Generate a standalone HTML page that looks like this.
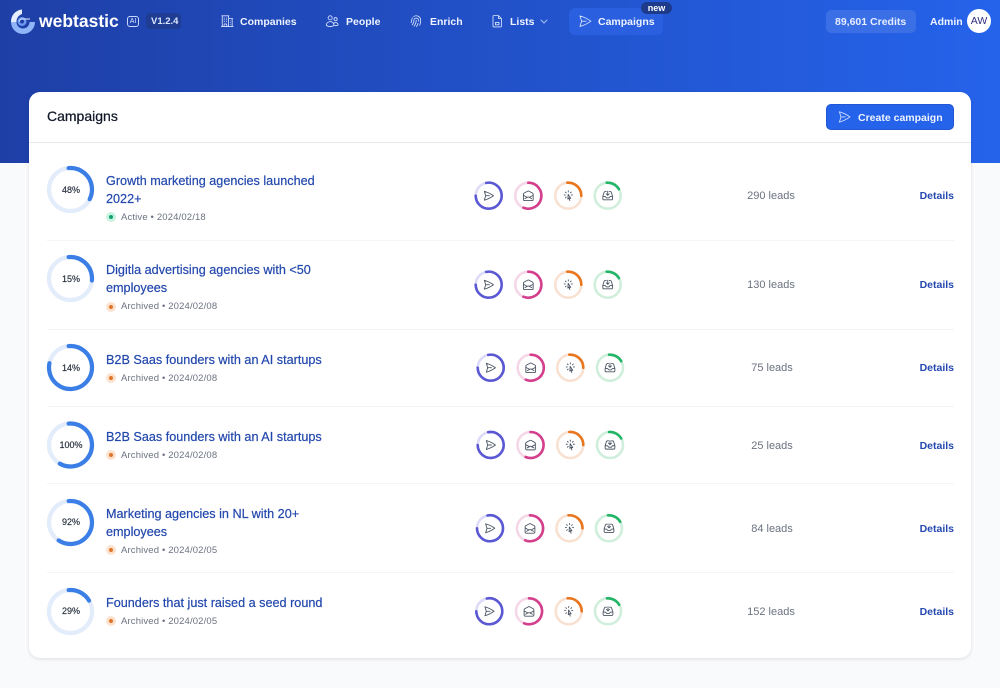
<!DOCTYPE html>
<html lang="en"><head><meta charset="utf-8"><title>Campaigns</title>
<style>
*{box-sizing:border-box}
html,body{margin:0;padding:0}
body{width:1000px;height:688px;overflow:hidden;position:relative;background:#f9fafb;font-family:"Liberation Sans",sans-serif}
.hero{position:absolute;left:0;top:0;width:1000px;height:163px;background:linear-gradient(90deg,#1e3fa6 0%,#2563eb 100%)}
.card{position:absolute;left:29px;top:92px;width:942px;height:566px;background:#fff;border-radius:11px;box-shadow:0 1px 3px rgba(0,0,0,.12)}
.t{position:absolute;white-space:nowrap;line-height:14px;height:14px}
.nav{font-size:10.5px;font-weight:bold;color:#eef3ff;top:15px}
.title{font-size:12.65px;color:#2348ad;-webkit-text-stroke:.2px #2348ad;line-height:18px;height:18px}
.meta{font-size:9.5px;color:#6b7280;letter-spacing:.15px}
.pct{font-size:9px;color:#1f2937;width:48px;text-align:center;left:47px;-webkit-text-stroke:.15px #1f2937}
.leads{font-size:11px;color:#6b7280;width:80px;text-align:center}
.det{font-size:10.5px;font-weight:bold;color:#2549b0;right:46px}
.sep{position:absolute;left:47px;width:907px;height:1px;background:#f3f4f6}
.box{position:absolute}
svg{position:absolute;left:0;top:0}
</style></head>
<body>
<div class="hero"></div>
<div class="box" style="left:146px;top:13px;width:35px;height:16px;background:#1f3d92;border-radius:4px"></div>
<div class="box" style="left:569px;top:8px;width:94px;height:27px;background:#2a5fdf;border-radius:6px"></div>
<div class="box" style="left:641px;top:2px;width:31px;height:12px;background:#1e3a8a;border-radius:6px"></div>
<div class="box" style="left:826px;top:10px;width:90px;height:23px;background:#3b6fe6;border-radius:5px"></div>
<div class="box" style="left:967px;top:9px;width:24px;height:24px;background:#fff;border-radius:50%"></div>

<div class="t" style="left:39px;top:10px;font-size:17.5px;line-height:22px;height:22px;font-weight:bold;color:#fff">webtastic</div>
<div class="box" style="left:127px;top:16px;width:12px;height:11px;border:1px solid #c9d8fb;border-radius:3px"></div>
<div class="t" style="left:127px;top:14.500px;width:12px;text-align:center;font-size:7px;color:#dbe6ff">AI</div>
<div class="t" style="left:151px;top:14.500px;font-size:9.5px;font-weight:bold;color:#dbe6ff">V1.2.4</div>
<div class="t nav" style="left:240px">Companies</div>
<div class="t nav" style="left:346px">People</div>
<div class="t nav" style="left:430px">Enrich</div>
<div class="t nav" style="left:510px">Lists</div>
<div class="t nav" style="left:598px">Campaigns</div>
<div class="t" style="left:641px;top:1px;width:31px;text-align:center;font-size:9px;font-weight:bold;color:#fff">new</div>
<div class="t nav" style="left:835px;color:#e6edff">89,601 Credits</div>
<div class="t nav" style="left:930px">Admin</div>
<div class="t" style="left:967px;top:14px;width:24px;text-align:center;font-size:10.5px;color:#312e81">AW</div>

<div class="card"></div>
<div class="box" style="left:29px;top:142px;width:942px;height:1px;background:#e5e7eb"></div>
<div class="t" style="left:47px;top:107px;height:18px;line-height:18px;font-size:14px;color:#111827;-webkit-text-stroke:.25px #111827">Campaigns</div>
<div class="box" style="left:826px;top:104px;width:128px;height:26px;background:#2563eb;border:1px solid #2156d4;border-radius:5px"></div>
<div class="t" style="left:858px;top:110.500px;font-size:10.500px;font-weight:bold;color:#eef3ff">Create campaign</div>

<div class="sep" style="top:240px"></div>
<div class="sep" style="top:329px"></div>
<div class="sep" style="top:406px"></div>
<div class="sep" style="top:483px"></div>
<div class="sep" style="top:572px"></div>

<div class="t pct" style="top:183px">48%</div>
<div class="t title" style="left:106px;top:172px">Growth marketing agencies launched</div>
<div class="t title" style="left:106px;top:190px">2022+</div>
<div class="box" style="left:106px;top:212px;width:10px;height:10px;border-radius:50%;background:#c9f2e0"></div>
<div class="box" style="left:109px;top:215px;width:4px;height:4px;border-radius:50%;background:#10a36f"></div>
<div class="t meta" style="left:121px;top:211px">Active • 2024/02/18</div>
<div class="t leads" style="left:731px;top:189px">290 leads</div>
<div class="t det" style="top:189px">Details</div>

<div class="t pct" style="top:272px">15%</div>
<div class="t title" style="left:106px;top:261px">Digitla advertising agencies with &lt;50</div>
<div class="t title" style="left:106px;top:279px">employees</div>
<div class="box" style="left:106px;top:302px;width:10px;height:10px;border-radius:50%;background:#fde3cf"></div>
<div class="box" style="left:109px;top:305px;width:4px;height:4px;border-radius:50%;background:#e0752a"></div>
<div class="t meta" style="left:121px;top:300px">Archived • 2024/02/08</div>
<div class="t leads" style="left:731px;top:278px">130 leads</div>
<div class="t det" style="top:278px">Details</div>

<div class="t pct" style="top:361px">14%</div>
<div class="t title" style="left:106px;top:351px">B2B Saas founders with an AI startups</div>
<div class="box" style="left:106px;top:373px;width:10px;height:10px;border-radius:50%;background:#fde3cf"></div>
<div class="box" style="left:109px;top:376px;width:4px;height:4px;border-radius:50%;background:#e0752a"></div>
<div class="t meta" style="left:121px;top:372px">Archived • 2024/02/08</div>
<div class="t leads" style="left:732px;top:361px">75 leads</div>
<div class="t det" style="top:361px">Details</div>

<div class="t pct" style="top:438px">100%</div>
<div class="t title" style="left:106px;top:428px">B2B Saas founders with an AI startups</div>
<div class="box" style="left:106px;top:450px;width:10px;height:10px;border-radius:50%;background:#fde3cf"></div>
<div class="box" style="left:109px;top:453px;width:4px;height:4px;border-radius:50%;background:#e0752a"></div>
<div class="t meta" style="left:121px;top:449px">Archived • 2024/02/08</div>
<div class="t leads" style="left:732px;top:439px">25 leads</div>
<div class="t det" style="top:439px">Details</div>

<div class="t pct" style="top:515px">92%</div>
<div class="t title" style="left:106px;top:505px">Marketing agencies in NL with 20+</div>
<div class="t title" style="left:106px;top:523px">employees</div>
<div class="box" style="left:106px;top:545px;width:10px;height:10px;border-radius:50%;background:#fde3cf"></div>
<div class="box" style="left:109px;top:548px;width:4px;height:4px;border-radius:50%;background:#e0752a"></div>
<div class="t meta" style="left:121px;top:544px">Archived • 2024/02/05</div>
<div class="t leads" style="left:732px;top:522px">84 leads</div>
<div class="t det" style="top:522px">Details</div>

<div class="t pct" style="top:604px">29%</div>
<div class="t title" style="left:106px;top:594px">Founders that just raised a seed round</div>
<div class="box" style="left:106px;top:616px;width:10px;height:10px;border-radius:50%;background:#fde3cf"></div>
<div class="box" style="left:109px;top:619px;width:4px;height:4px;border-radius:50%;background:#e0752a"></div>
<div class="t meta" style="left:121px;top:615px">Archived • 2024/02/05</div>
<div class="t leads" style="left:731px;top:605px">152 leads</div>
<div class="t det" style="top:605px">Details</div>

<svg width="1000" height="688" viewBox="0 0 1000 688" fill="none">
<defs>
<g id="plane"><path d="M6 12 3.269 3.125A59.769 59.769 0 0 1 21.485 12 59.768 59.768 0 0 1 3.27 20.875L5.999 12Zm0 0h7.5"/></g>
<g id="mail"><path d="M21.75 9v.906a2.25 2.25 0 0 1-1.183 1.981l-6.478 3.488M2.25 9v.906a2.25 2.25 0 0 0 1.183 1.981l6.478 3.488m8.839 2.51-4.66-2.51m0 0-1.023-.55a2.25 2.25 0 0 0-2.134 0l-1.022.55m0 0-4.661 2.51m16.5 1.615a2.25 2.25 0 0 1-2.25 2.25h-15a2.25 2.25 0 0 1-2.25-2.25V8.844a2.25 2.25 0 0 1 1.183-1.981l7.5-4.039a2.25 2.25 0 0 1 2.134 0l7.5 4.039a2.25 2.25 0 0 1 1.183 1.98V19.5Z"/></g>
<g id="cursor"><path d="M15.042 21.672 13.684 16.6m0 0-2.51 2.225.569-9.47 5.227 7.917-3.286-.672ZM12 2.25V4.5m5.834.166-1.591 1.591M20.25 10.5H18M7.757 14.743l-1.59 1.59M6 10.5H3.75m4.007-4.243-1.59-1.59"/></g>
<g id="inbox"><path d="M9 3.75H6.912a2.25 2.25 0 0 0-2.15 1.588L2.35 13.177a2.25 2.25 0 0 0-.1.661V18a2.25 2.25 0 0 0 2.25 2.25h15A2.25 2.25 0 0 0 21.75 18v-4.162c0-.224-.034-.447-.1-.661L19.24 5.338a2.25 2.25 0 0 0-2.15-1.588H15M2.25 13.5h3.86a2.25 2.25 0 0 1 2.012 1.244l.256.512a2.25 2.25 0 0 0 2.013 1.244h3.218a2.25 2.25 0 0 0 2.013-1.244l.256-.512a2.25 2.25 0 0 1 2.013-1.244h3.859M12 3v8.25m0 0-3-3m3 3 3-3"/></g>
<g id="p"><circle r="13" stroke="#dedbf8" stroke-width="2.6"/><path d="M-2.500-12.800A13 13 0 1 1-13 0" stroke="#5a58d2" stroke-width="2.6" stroke-linecap="round"/><use href="#plane" transform="translate(-6,-6) scale(.5)" stroke="#4b5563" stroke-width="1.8" stroke-linecap="round" stroke-linejoin="round"/></g>
<g id="m"><circle r="13" stroke="#f6d7e7" stroke-width="2.6"/><path d="M0-13A13 13 0 1 1-4.900 12" stroke="#d43f8d" stroke-width="2.6" stroke-linecap="round"/><use href="#mail" transform="translate(-6,-6) scale(.5)" stroke="#4b5563" stroke-width="1.8" stroke-linecap="round" stroke-linejoin="round"/></g>
<g id="c"><circle r="13" stroke="#f9e1d2" stroke-width="2.6"/><path d="M-1-13A13 13 0 0 1 13 0" stroke="#e8761e" stroke-width="2.6" stroke-linecap="round"/><use href="#cursor" transform="translate(-6,-6) scale(.5)" stroke="#4b5563" stroke-width="1.8" stroke-linecap="round" stroke-linejoin="round"/></g>
<g id="i"><circle r="13" stroke="#cfeedb" stroke-width="2.6"/><path d="M-1-13A13 13 0 0 1 11.200-6.500" stroke="#22b566" stroke-width="2.6" stroke-linecap="round"/><use href="#inbox" transform="translate(-6,-6) scale(.5)" stroke="#4b5563" stroke-width="1.8" stroke-linecap="round" stroke-linejoin="round"/></g>
</defs>

<!-- logo -->
<path d="M35 22A12 12 0 0 1 11 22H16.500A6.500 6.500 0 0 0 29.500 22Z" fill="#8fb4f8"/>
<path d="M11 22A12 12 0 0 1 22 9.500V14A8 8 0 0 0 16.500 22Z" fill="#e5edff"/>
<circle cx="22" cy="21.500" r="4.500" fill="#6d9af0"/>
<circle cx="22" cy="21.500" r="2" fill="#1e3fa6"/>
<path d="M22 19h8M22 19A2.500 2.500 0 0 0 19.500 21.500" stroke="#e5edff" stroke-width="1"/>

<!-- nav icons -->
<g stroke="#dbe6ff" stroke-width="1.4" stroke-linecap="round" stroke-linejoin="round">
<path transform="translate(220,14) scale(.6)" d="M2.25 21h19.5m-18-18v18m10.5-18v18m6-13.5V21M6.75 6.75h.75m-.75 3h.75m-.75 3h.75m3-6h.75m-.75 3h.75m-.75 3h.75M6.75 21v-3.375c0-.621.504-1.125 1.125-1.125h2.25c.621 0 1.125.504 1.125 1.125V21M3 3h12m-.75 4.5H21m-3.75 3.75h.008v.008h-.008v-.008Zm0 3h.008v.008h-.008v-.008Zm0 3h.008v.008h-.008v-.008Z"/>
<path transform="translate(325,14) scale(.6)" d="M15 19.128a9.38 9.38 0 0 0 2.625.372 9.337 9.337 0 0 0 4.121-.952 4.125 4.125 0 0 0-7.533-2.493M15 19.128v-.003c0-1.113-.285-2.16-.786-3.07M15 19.128v.106A12.318 12.318 0 0 1 8.624 21c-2.331 0-4.512-.645-6.374-1.766l-.001-.109a6.375 6.375 0 0 1 11.964-3.07M12 6.375a3.375 3.375 0 1 1-6.75 0 3.375 3.375 0 0 1 6.75 0Zm8.25 2.25a2.625 2.625 0 1 1-5.25 0 2.625 2.625 0 0 1 5.25 0Z"/>
<path transform="translate(409,14) scale(.6)" d="M7.864 4.243A7.5 7.5 0 0 1 19.5 10.5c0 2.92-.556 5.709-1.568 8.268M5.742 6.364A7.465 7.465 0 0 0 4.5 10.5a7.464 7.464 0 0 1-1.15 3.993m1.989 3.559A11.209 11.209 0 0 0 8.25 10.5a3.75 3.75 0 1 1 7.5 0c0 .527-.021 1.049-.064 1.565M12 10.5a14.94 14.94 0 0 1-3.6 9.75m6.633-4.596a18.666 18.666 0 0 1-2.485 5.33"/>
<path transform="translate(490,14) scale(.6)" d="M14 2.500H6.500A1.500 1.500 0 0 0 5 4v16a1.500 1.500 0 0 0 1.500 1.500h11A1.500 1.500 0 0 0 19 20V7.500L14 2.500ZM14 2.500V7.500H19M9 14h6v4H9Z"/>
<path d="M541 20l3 3 3-3" stroke="#a9c0f6" stroke-width="1"/>
<use href="#plane" transform="translate(578,14) scale(.6)"/>
<use href="#plane" transform="translate(837.500,110) scale(.58)"/>
</g>

<!-- big rings -->
<g stroke-width="4.200">
<circle cx="70.500" cy="189.500" r="21.500" stroke="#e3ecfa"/><circle cx="70.500" cy="278.500" r="21.500" stroke="#e3ecfa"/><circle cx="70.500" cy="367.500" r="21.500" stroke="#e3ecfa"/><circle cx="70.500" cy="445" r="21.500" stroke="#e3ecfa"/><circle cx="70.500" cy="522.500" r="21.500" stroke="#e3ecfa"/><circle cx="70.500" cy="611.500" r="21.500" stroke="#e3ecfa"/>
<g stroke="#3b7fe6" stroke-linecap="round">
<circle pathLength="100" stroke-dasharray="34 100" r="21.500" transform="translate(70.500,189.500) rotate(-95)"/>
<circle pathLength="100" stroke-dasharray="28 100" r="21.500" transform="translate(70.500,278.500) rotate(-95)"/>
<circle pathLength="100" stroke-dasharray="80 100" r="21.500" transform="translate(70.500,367.500) rotate(-95)"/>
<circle pathLength="100" stroke-dasharray="60 100" r="21.500" transform="translate(70.500,445) rotate(-95)"/>
<circle pathLength="100" stroke-dasharray="61 100" r="21.500" transform="translate(70.500,522.500) rotate(-95)"/>
<circle pathLength="100" stroke-dasharray="18 100" r="21.500" transform="translate(70.500,611.500) rotate(-95)"/>
</g></g>

<!-- small rings -->
<use href="#p" x="488.700" y="195.700"/><use href="#m" x="528.300" y="195.700"/><use href="#c" x="568.300" y="195.700"/><use href="#i" x="607.700" y="195.700"/>
<use href="#p" x="488.700" y="284.700"/><use href="#m" x="528.300" y="284.700"/><use href="#c" x="568.300" y="284.700"/><use href="#i" x="607.700" y="284.700"/>
<use href="#p" x="490.700" y="367.700"/><use href="#m" x="530.700" y="367.700"/><use href="#c" x="570.300" y="367.700"/><use href="#i" x="610" y="367.700"/>
<use href="#p" x="490.700" y="445"/><use href="#m" x="530.500" y="445"/><use href="#c" x="570.300" y="445"/><use href="#i" x="610" y="445"/>
<use href="#p" x="490" y="528.300"/><use href="#m" x="530" y="528.300"/><use href="#c" x="569.500" y="528.300"/><use href="#i" x="609" y="528.300"/>
<use href="#p" x="489.300" y="611.300"/><use href="#m" x="529" y="611.300"/><use href="#c" x="568.700" y="611.300"/><use href="#i" x="608" y="611.300"/>
</svg>
</body></html>
